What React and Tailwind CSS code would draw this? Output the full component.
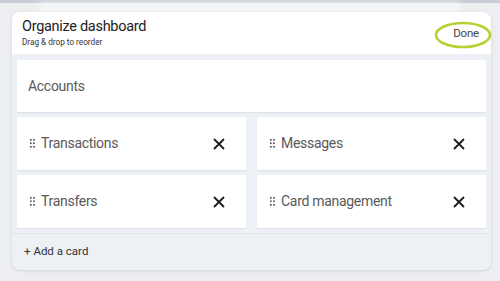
import React from "react";

function Handle() {
  return (
    <svg width="5" height="9" viewBox="0 0 5 9" className="shrink-0">
      {[0, 3.5, 7].map((y) => (
        <g key={y}>
          <rect x="0" y={y} width="1.6" height="1.6" fill="#444" />
          <rect x="3.2" y={y} width="1.6" height="1.6" fill="#444" />
        </g>
      ))}
    </svg>
  );
}

function XIcon() {
  return (
    <svg width="12" height="12" viewBox="0 0 12 12" className="shrink-0">
      <path d="M1.5 1.5 L10.5 10.5 M10.5 1.5 L1.5 10.5" stroke="#1b1b1b" strokeWidth="1.8" strokeLinecap="round" />
    </svg>
  );
}

function Tile({ label }) {
  return (
    <div className="h-[53px] bg-white flex items-center pl-[13px] pr-[21px] shadow-[0_1px_1px_rgba(0,0,0,0.06)]">
      <Handle />
      <span className="ml-[6px] text-[14px] tracking-[-0.3px] text-[#595959] flex-1">{label}</span>
      <XIcon />
    </div>
  );
}

export default function App() {
  return (
    <div
      className="relative w-[500px] h-[281px] overflow-hidden bg-[#eceef2] pt-[12px] pl-[12px]"
      style={{ fontFamily: "Roboto, 'Liberation Sans', sans-serif" }}
    >
      <div className="absolute left-0 top-0 w-full h-[3px] bg-[#c9cdd6]" />
      <div className="absolute left-[40px] top-[3px] w-[420px] h-[9px] bg-[#f6f7f9] blur-[3px]" />
      <div className="relative w-[479px] h-[258px] rounded-[8px] bg-[#edf0f5] overflow-hidden shadow-[0_1px_3px_rgba(0,0,0,0.12)] flex flex-col">
        <div className="h-[42px] bg-white flex items-start justify-between px-[10px] pt-[6px]">
          <div className="flex flex-col">
            <span className="text-[14.5px] tracking-[-0.3px] leading-[18px] text-[#222]">Organize dashboard</span>
            <span className="text-[8.2px] leading-[12px] text-[#333]">Drag &amp; drop to reorder</span>
          </div>
          <span className="text-[11.5px] tracking-[-0.2px] leading-[14px] text-[#444] mt-[8px] mr-[2px]">Done</span>
        </div>
        <div className="px-[5px] pt-[6px] pb-[5px] flex flex-col gap-[5px]">
          <div className="h-[52px] bg-white flex items-center pl-[11px] shadow-[0_1px_1px_rgba(0,0,0,0.06)]">
            <span className="text-[14px] tracking-[-0.3px] text-[#595959]">Accounts</span>
          </div>
          <div className="grid grid-cols-2 gap-x-[11px] gap-y-[5px]">
            <Tile label="Transactions" />
            <Tile label="Messages" />
            <Tile label="Transfers" />
            <Tile label="Card management" />
          </div>
        </div>
        <div className="flex-1 border-t border-[#dfe3ea] flex items-center pl-[12px]">
          <span className="text-[11.5px] text-[#333]">+ Add a card</span>
        </div>
      </div>
      <svg className="absolute left-[434px] top-[21px]" width="60" height="29" viewBox="0 0 60 29">
        <ellipse cx="29" cy="14" rx="27" ry="12" fill="none" stroke="#b4d332" strokeWidth="2.6" />
      </svg>
    </div>
  );
}
